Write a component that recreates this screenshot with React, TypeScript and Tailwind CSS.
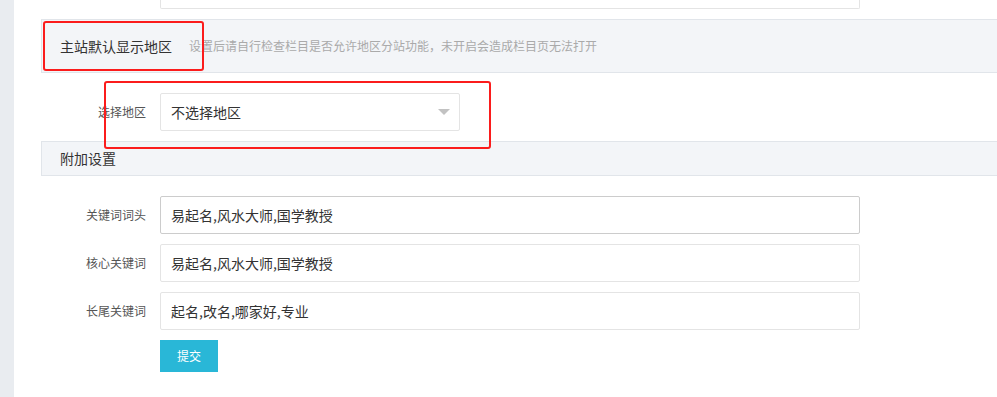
import React from "react";

const font = { fontFamily: '"Noto Sans CJK SC", "Noto Sans", sans-serif' };

function Row({ label, value, dark }: { label: string; value: string; dark?: boolean }) {
  return (
    <div className="flex items-center">
      <div className="w-[132px] text-right text-[12px] text-[#555]">{label}</div>
      <div
        className={`ml-[14px] w-[700px] h-[38px] border rounded-[2px] flex items-center pl-[10px] text-[14px] text-[#333] ${
          dark ? "border-[#cccccc]" : "border-[#e4e4e4]"
        }`}
      >
        {value}
      </div>
    </div>
  );
}

export default function App() {
  return (
    <div className="w-[997px] h-[397px] flex overflow-hidden bg-white" style={font}>
      <div className="w-[14px] shrink-0 bg-[#e9ecf0]" />
      <div className="relative flex-1 flex flex-col overflow-hidden">
        <div className="ml-[146px] w-[700px] h-[9px] border border-t-0 border-[#e4e4e4] rounded-b-[2px]" />

        <div className="mt-[10px] ml-[27px] h-[54px] shrink-0 bg-[#f3f5f8] border border-r-0 border-[#e1e5ea] flex items-center pl-[18px]">
          <span className="text-[14px] text-[#333]">主站默认显示地区</span>
          <span className="ml-[17px] text-[12px] text-[#aaa]">
            设置后请自行检查栏目是否允许地区分站功能，未开启会造成栏目页无法打开
          </span>
        </div>

        <div className="mt-[20px] flex items-center">
          <div className="w-[132px] text-right text-[12px] text-[#555]">选择地区</div>
          <div className="ml-[14px] w-[300px] h-[38px] border border-[#e4e4e4] rounded-[2px] flex items-center justify-between pl-[10px] pr-[9px] text-[14px] text-[#333]">
            <span>不选择地区</span>
            <span className="w-0 h-0 border-l-[6.5px] border-r-[6.5px] border-t-[6px] border-l-transparent border-r-transparent border-t-[#c2c2c2]" />
          </div>
        </div>

        <div className="mt-[10px] ml-[27px] h-[35px] shrink-0 bg-[#f3f5f8] border border-r-0 border-[#e1e5ea] flex items-center pl-[18px]">
          <span className="text-[14px] text-[#333]">附加设置</span>
        </div>

        <div className="mt-[20px] flex flex-col gap-[10px]">
          <Row label="关键词词头" value="易起名,风水大师,国学教授" dark />
          <Row label="核心关键词" value="易起名,风水大师,国学教授" />
          <Row label="长尾关键词" value="起名,改名,哪家好,专业" />
          <div className="flex">
            <button className="ml-[146px] w-[58px] h-[32px] bg-[#29b7d7] text-white text-[12px]">提交</button>
          </div>
        </div>

        <div className="absolute left-[29px] top-[21px] w-[161px] h-[50px] border-[2.5px] border-[#fb1c1c] rounded-[3px]" />
        <div className="absolute left-[90px] top-[81px] w-[387px] h-[68px] border-[2.5px] border-[#fb1c1c] rounded-[3px]" />
      </div>
    </div>
  );
}
